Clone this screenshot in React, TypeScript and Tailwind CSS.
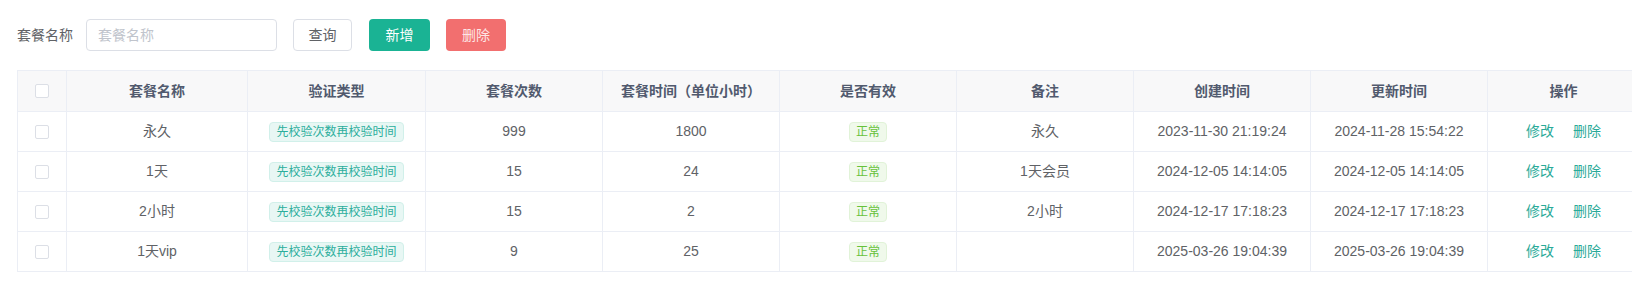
import React from "react";

const rows = [
  { name: "永久", count: "999", hours: "1800", remark: "永久", created: "2023-11-30 21:19:24", updated: "2024-11-28 15:54:22" },
  { name: "1天", count: "15", hours: "24", remark: "1天会员", created: "2024-12-05 14:14:05", updated: "2024-12-05 14:14:05" },
  { name: "2小时", count: "15", hours: "2", remark: "2小时", created: "2024-12-17 17:18:23", updated: "2024-12-17 17:18:23" },
  { name: "1天vip", count: "9", hours: "25", remark: "", created: "2025-03-26 19:04:39", updated: "2025-03-26 19:04:39" },
];

const headers = ["套餐名称", "验证类型", "套餐次数", "套餐时间（单位小时）", "是否有效", "备注", "创建时间", "更新时间", "操作"];

const base = "box-border border-r border-b border-[#ebeef5] flex items-center justify-center";
const cell = `h-10 ${base}`;
const head = `h-[41px] ${base} bg-[#f8f8f9]`;

function Checkbox() {
  return <span className="block w-[14px] h-[14px] box-border border border-[#dcdfe6] rounded-[2px] bg-white" />;
}

export default function App() {
  return (
    <div
      className="w-[1632px] h-[284px] overflow-hidden bg-white pl-[17px] pt-[19px] text-[14px] text-[#606266]"
      style={{ fontFamily: '"Liberation Sans", "Noto Sans CJK SC", sans-serif' }}
    >
      <div className="flex items-center h-8">
        <span className="text-[14px] text-[#606266] mr-[13px]">套餐名称</span>
        <input
          placeholder="套餐名称"
          className="w-[191px] h-8 box-border border border-[#dcdfe6] rounded-[4px] pl-[11px] text-[14px] outline-none placeholder:text-[#c0c4cc]"
        />
        <button className="ml-4 h-8 w-[59px] box-border border border-[#dcdfe6] rounded-[4px] bg-white text-[#606266] text-[14px]">查询</button>
        <button className="ml-[17px] h-8 w-[61px] rounded-[4px] bg-[#1ab394] text-white text-[14px]">新增</button>
        <button className="ml-4 h-8 w-[60px] rounded-[4px] bg-[#f26f6f] text-[#fde6e6] text-[14px]">删除</button>
      </div>

      <div className="mt-[19px] w-[1622px] border-t border-l border-[#ebeef5] grid grid-cols-[49px_181px_178px_177px_177px_177px_177px_177px_177px_152px]">
        <div className={head}>
          <Checkbox />
        </div>
        {headers.map((h) => (
          <div key={h} className={`${head} font-bold text-[#515a6e]`}>
            {h}
          </div>
        ))}
        {rows.map((r, i) => (
          <React.Fragment key={i}>
            <div className={cell}>
              <Checkbox />
            </div>
            <div className={cell}>{r.name}</div>
            <div className={cell}>
              <span className="h-5 box-border px-[6px] flex items-center rounded-[4px] border border-[#d1f0ea] bg-[#e8f7f4] text-[#2bae9c] text-[12px]">
                先校验次数再校验时间
              </span>
            </div>
            <div className={cell}>{r.count}</div>
            <div className={cell}>{r.hours}</div>
            <div className={cell}>
              <span className="h-5 box-border px-[6px] flex items-center rounded-[4px] border border-[#e1f3d8] bg-[#f0f9eb] text-[#67c23a] text-[12px]">
                正常
              </span>
            </div>
            <div className={cell}>{r.remark}</div>
            <div className={cell}>{r.created}</div>
            <div className={cell}>{r.updated}</div>
            <div className={`${cell} gap-[19px]`}>
              <span className="text-[#2aaa98] cursor-pointer">修改</span>
              <span className="text-[#2aaa98] cursor-pointer">删除</span>
            </div>
          </React.Fragment>
        ))}
      </div>
    </div>
  );
}
